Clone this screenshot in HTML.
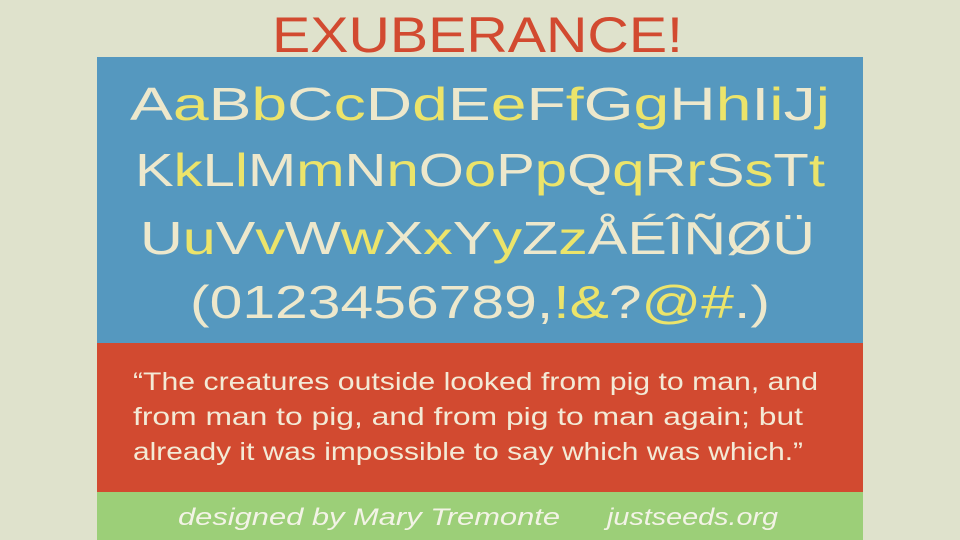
<!DOCTYPE html>
<html><head><meta charset="utf-8"><style>
html,body{margin:0;padding:0;width:960px;height:540px;overflow:hidden;background:#dfe2cc}
svg{display:block}
text{font-family:"Liberation Sans",sans-serif}
</style></head><body>
<svg width="960" height="540" viewBox="0 0 960 540">
<rect width="960" height="540" fill="#dfe2cc"/>
<rect x="97" y="57" width="766" height="286" fill="#5598bf"/>
<rect x="97" y="343" width="766" height="149" fill="#d24a30"/>
<rect x="97" y="492" width="766" height="48" fill="#9ccf78"/>
<text x="272" y="52" textLength="411" lengthAdjust="spacingAndGlyphs" font-size="50" fill="#d24a30">EXUBERANCE!</text>
<g font-size="46" fill="#ede8cc">
<text x="130" y="120" textLength="700" lengthAdjust="spacingAndGlyphs">A<tspan fill="#ece46a">a</tspan>B<tspan fill="#ece46a">b</tspan>C<tspan fill="#ece46a">c</tspan>D<tspan fill="#ece46a">d</tspan>E<tspan fill="#ece46a">e</tspan>F<tspan fill="#ece46a">f</tspan>G<tspan fill="#ece46a">g</tspan>H<tspan fill="#ece46a">h</tspan>I<tspan fill="#ece46a">i</tspan>J<tspan fill="#ece46a">j</tspan></text>
<text x="135" y="186" textLength="690" lengthAdjust="spacingAndGlyphs">K<tspan fill="#ece46a">k</tspan>L<tspan fill="#ece46a">l</tspan>M<tspan fill="#ece46a">m</tspan>N<tspan fill="#ece46a">n</tspan>O<tspan fill="#ece46a">o</tspan>P<tspan fill="#ece46a">p</tspan>Q<tspan fill="#ece46a">q</tspan>R<tspan fill="#ece46a">r</tspan>S<tspan fill="#ece46a">s</tspan>T<tspan fill="#ece46a">t</tspan></text>
<text x="140" y="254" textLength="675" lengthAdjust="spacingAndGlyphs">U<tspan fill="#ece46a">u</tspan>V<tspan fill="#ece46a">v</tspan>W<tspan fill="#ece46a">w</tspan>X<tspan fill="#ece46a">x</tspan>Y<tspan fill="#ece46a">y</tspan>Z<tspan fill="#ece46a">z</tspan>ÅÉÎÑØÜ</text>
<text x="190" y="318" textLength="580" lengthAdjust="spacingAndGlyphs">(0123456789,<tspan fill="#ece46a">!&amp;</tspan>?<tspan fill="#ece46a">@#</tspan>.)</text>
</g>
<g font-size="25" fill="#f3ead6">
<text x="133" y="390" textLength="685" lengthAdjust="spacingAndGlyphs">“The creatures outside looked from pig to man, and</text>
<text x="133" y="425" textLength="670" lengthAdjust="spacingAndGlyphs">from man to pig, and from pig to man again; but</text>
<text x="133" y="460" textLength="670" lengthAdjust="spacingAndGlyphs">already it was impossible to say which was which.”</text>
</g>
<g font-size="24" fill="#f3f3e6" font-style="italic">
<text x="178" y="525" textLength="382" lengthAdjust="spacingAndGlyphs">designed by Mary Tremonte</text>
<text x="607" y="525" textLength="171" lengthAdjust="spacingAndGlyphs">justseeds.org</text>
</g>
</svg>
</body></html>
